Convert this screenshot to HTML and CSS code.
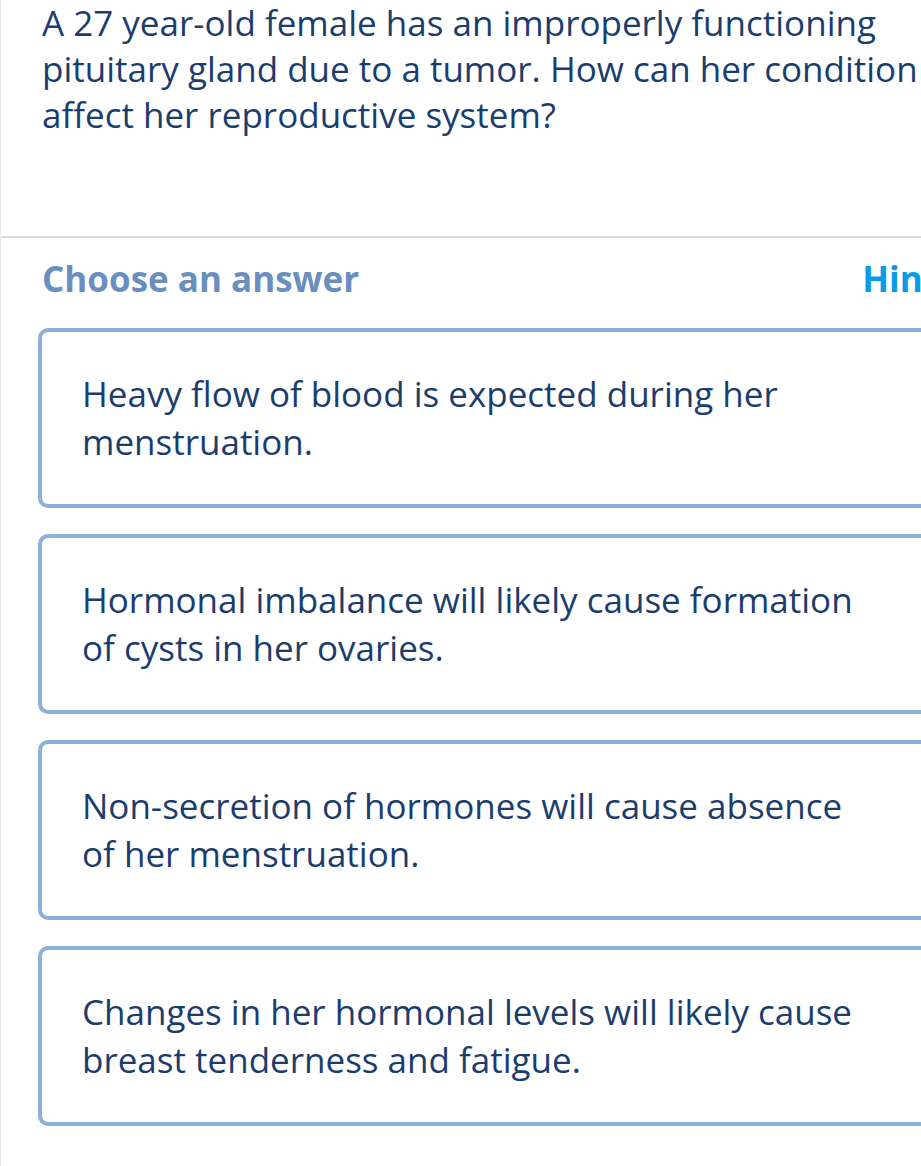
FILE: index.html
```html
<!DOCTYPE html>
<html lang="en">
<head>
    <meta charset="UTF-8">
    <meta name="viewport" content="width=device-width, initial-scale=1.0">
    <title>Question</title>
    <link rel="stylesheet" href="styles.css">
</head>
<body>
    <div class="page">
        <div class="question">
            <p>A 27 year-old female has an improperly functioning pituitary gland due to a tumor. How can her condition affect her reproductive system?</p>
        </div>

        <div class="answers">
            <div class="answers-head">
                <h3>Choose an answer</h3>
                <span class="hint">Hint</span>
            </div>

            <div class="option">Heavy flow of blood is expected during her menstruation.</div>
            <div class="option">Hormonal imbalance will likely cause formation of cysts in her ovaries.</div>
            <div class="option">Non-secretion of hormones will cause absence of her menstruation.</div>
            <div class="option">Changes in her hormonal levels will likely cause breast tenderness and fatigue.</div>
        </div>
    </div>
</body>
</html>
```

FILE: styles.css
```css
body {
    margin: 0;
    font-family: "Open Sans", Arial, sans-serif;
    background-color: #ffffff;
    color: #1b3d6e;
    overflow: hidden;
}
.page {
    width: 1000px;
    min-height: 1166px;
    border-left: 1px solid #e8e8e8;
    box-sizing: border-box;
}
.question {
    height: 238px;
    padding: 0 41px;
    border-bottom: 2px solid #dcdcdc;
    box-sizing: border-box;
}
.question p {
    margin: 0;
    width: 885px;
    font-size: 35px;
    line-height: 46px;
}
.answers {
    padding: 0 0 0 37px;
}
.answers-head {
    display: flex;
    justify-content: space-between;
    align-items: center;
    width: 896px;
    padding: 16px 0 0 4px;
    height: 48px;
    margin-bottom: 26px;
}
h3 {
    margin: 0;
    font-size: 35px;
    font-weight: 700;
    color: #6a8fbf;
}
.hint {
    font-size: 35px;
    font-weight: 700;
    color: #0a9be8;
}
.option {
    width: 960px;
    height: 180px;
    box-sizing: border-box;
    border: 4px solid #8eafd7;
    border-radius: 10px;
    padding: 38px 130px 38px 40px;
    margin-bottom: 26px;
    font-size: 35px;
    line-height: 48px;
}
```
